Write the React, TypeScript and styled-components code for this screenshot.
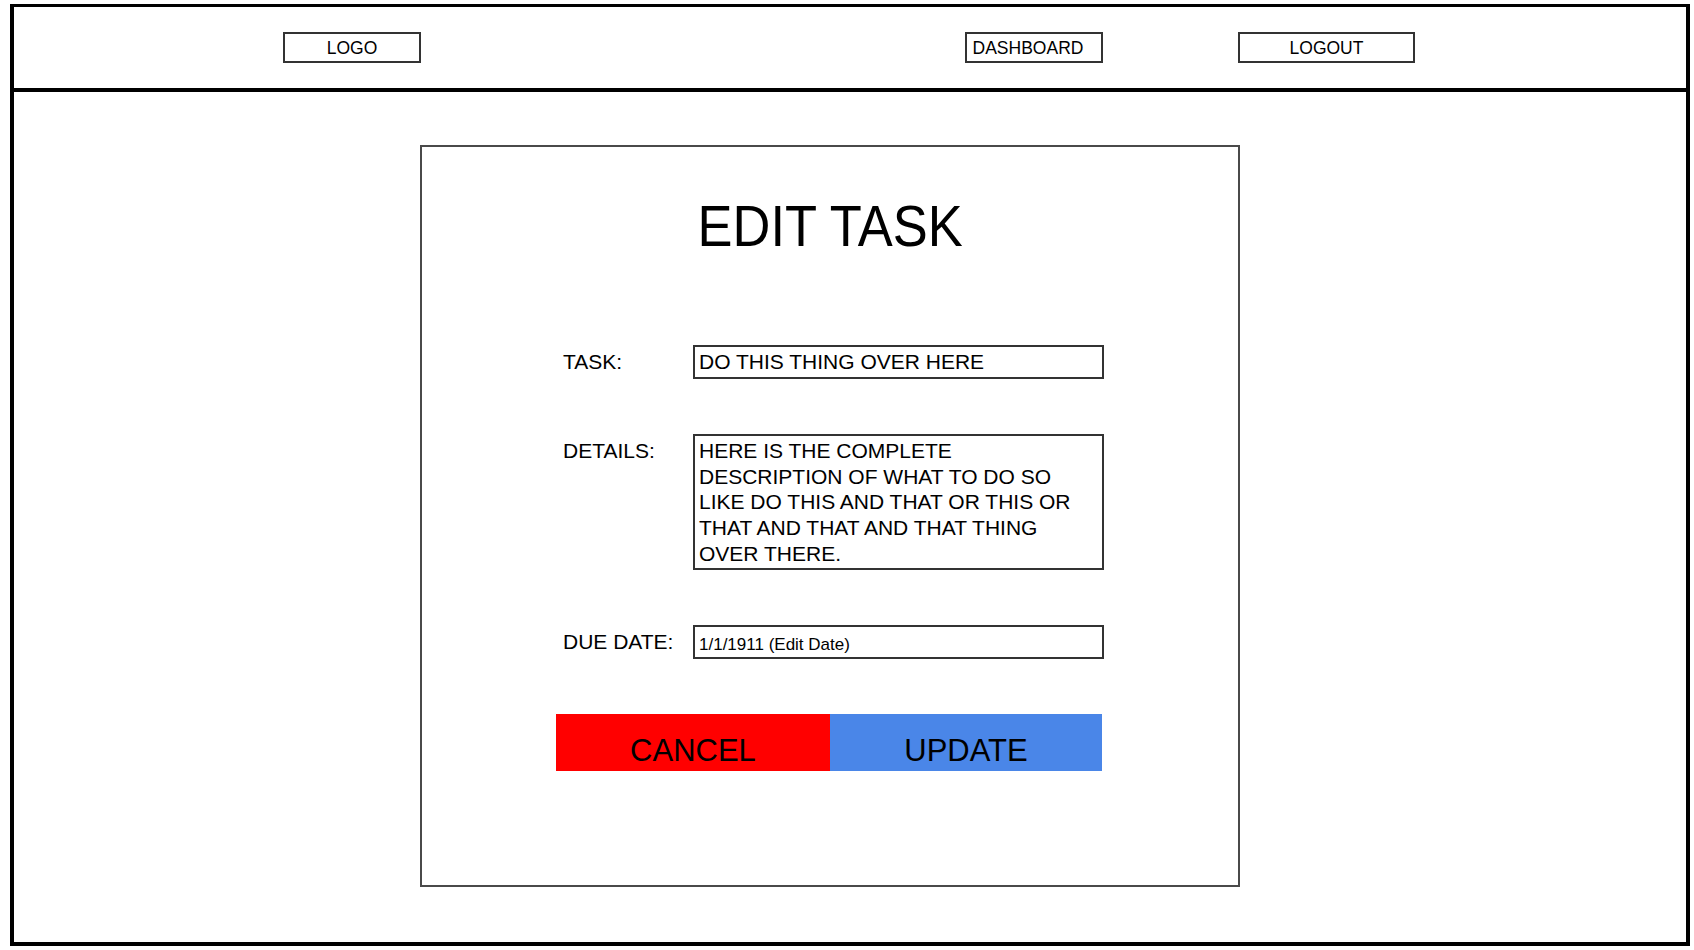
import React from "react";
import styled, { createGlobalStyle } from "styled-components";

const GlobalStyle = createGlobalStyle`
  html, body {
    margin: 0;
    padding: 0;
    background: #ffffff;
    font-family: "Liberation Sans", Arial, sans-serif;
    color: #000;
  }
  * { box-sizing: border-box; }
`;

const Frame = styled.div`
  margin: 4px 0 0 10px;
  width: 1680px;
  height: 942px;
  border: 4px solid #000;
  border-top-width: 3px;
  display: flex;
  flex-direction: column;
  background: #fff;
`;

const Header = styled.header`
  height: 85px;
  border-bottom: 4px solid #000;
  display: flex;
  align-items: center;
  padding-left: 269px;
`;

const NavGroup = styled.nav`
  display: flex;
  align-items: center;
  gap: 135px;
  margin-left: 544px;
`;

const NavBox = styled.div<{ $width: number; $padRight?: number }>`
  width: ${(p) => p.$width}px;
  height: 31px;
  border: 2px solid #333;
  display: flex;
  align-items: center;
  justify-content: center;
  padding-top: 2px;
  padding-right: ${(p) => p.$padRight ?? 0}px;
  font-size: 17.5px;
  color: #000;
  white-space: nowrap;
`;

const Main = styled.main`
  flex: 1;
  padding: 53px 0 0 406px;
`;

const Card = styled.section`
  width: 820px;
  height: 742px;
  border: 2px solid #4a4a4a;
  display: flex;
  flex-direction: column;
  padding: 51px 0 0 134px;
`;

const TitleRow = styled.div`
  width: 548px;
  text-align: center;
  height: 57px;
`;

const Title = styled.h1`
  display: inline-block;
  margin: 0;
  font-size: 57px;
  line-height: 57px;
  font-weight: 400;
  transform: scaleX(0.92);
  transform-origin: center;
`;

const Form = styled.form`
  margin-top: 90px;
  width: 548px;
  display: flex;
  flex-direction: column;
  gap: 55px;
`;

const Row = styled.div<{ $top?: boolean }>`
  display: grid;
  grid-template-columns: 130px 411px;
  padding-left: 7px;
  align-items: ${(p) => (p.$top ? "start" : "center")};
`;

const Label = styled.label<{ $top?: boolean }>`
  font-size: 21px;
  line-height: 25.7px;
  padding-top: ${(p) => (p.$top ? 4 : 0)}px;
  color: #000;
`;

const TextInput = styled.input<{ $size: number; $height: number; $shift?: number }>`
  width: 411px;
  height: ${(p) => p.$height}px;
  border: 2px solid #333;
  border-radius: 0;
  padding: ${(p) => p.$shift ?? 0}px 4px 0;
  margin: 0;
  font-family: "Liberation Sans", Arial, sans-serif;
  font-size: ${(p) => p.$size}px;
  color: #000;
  background: #fff;
  outline: none;
`;

const TextArea = styled.textarea`
  width: 411px;
  height: 136px;
  border: 2px solid #333;
  border-radius: 0;
  padding: 2px 4px;
  margin: 0;
  font-family: "Liberation Sans", Arial, sans-serif;
  font-size: 21px;
  line-height: 25.7px;
  color: #000;
  background: #fff;
  resize: none;
  overflow: hidden;
  outline: none;
`;

const ButtonRow = styled.div`
  display: flex;
`;

const ActionButton = styled.button<{ $bg: string; $width: number }>`
  width: ${(p) => p.$width}px;
  height: 57px;
  border: none;
  border-radius: 0;
  margin: 0;
  padding: 16px 0 0;
  background: ${(p) => p.$bg};
  font-family: "Liberation Sans", Arial, sans-serif;
  font-size: 31px;
  line-height: 41px;
  color: #000;
  text-align: center;
  cursor: pointer;
`;

const details =
  "HERE IS THE COMPLETE\nDESCRIPTION OF WHAT TO DO SO\nLIKE DO THIS AND THAT OR THIS OR\nTHAT AND THAT AND THAT THING\nOVER THERE.";

export default function App() {
  return (
    <>
      <GlobalStyle />
      <Frame>
        <Header>
          <NavBox $width={138}>LOGO</NavBox>
          <NavGroup>
            <NavBox $width={138} $padRight={12}>
              DASHBOARD
            </NavBox>
            <NavBox $width={177}>LOGOUT</NavBox>
          </NavGroup>
        </Header>
        <Main>
          <Card>
            <TitleRow>
              <Title>EDIT TASK</Title>
            </TitleRow>
            <Form onSubmit={(e) => e.preventDefault()}>
              <Row>
                <Label>TASK:</Label>
                <TextInput
                  $size={21}
                  $height={34}
                  defaultValue="DO THIS THING OVER HERE"
                />
              </Row>
              <Row $top>
                <Label $top>DETAILS:</Label>
                <TextArea defaultValue={details} />
              </Row>
              <Row>
                <Label>DUE DATE:</Label>
                <TextInput
                  $size={17}
                  $height={34}
                  $shift={5}
                  defaultValue="1/1/1911 (Edit Date)"
                />
              </Row>
              <ButtonRow>
                <ActionButton type="button" $bg="#ff0000" $width={274}>
                  CANCEL
                </ActionButton>
                <ActionButton type="submit" $bg="#4a86e8" $width={272}>
                  UPDATE
                </ActionButton>
              </ButtonRow>
            </Form>
          </Card>
        </Main>
      </Frame>
    </>
  );
}
